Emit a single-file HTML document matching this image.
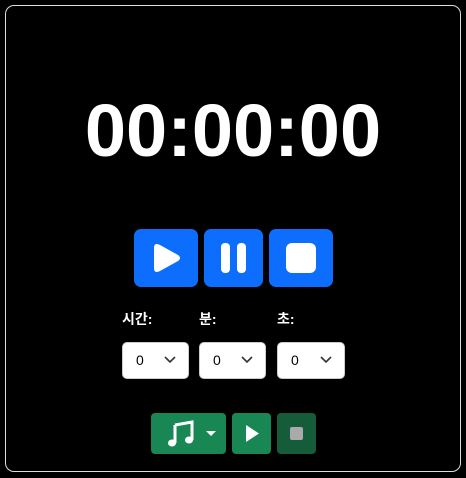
<!DOCTYPE html>
<html><head><meta charset="utf-8"><style>
body{margin:0;background:#000;width:466px;height:478px;position:relative;overflow:hidden;font-family:"Liberation Sans","Noto Sans CJK KR",sans-serif}
.frame{position:absolute;left:5px;top:5px;width:454px;height:465px;border:1px solid #ddd;border-radius:9px}
.time{position:absolute;left:0;width:466px;top:88px;text-align:center;color:#fff;font-weight:bold;font-size:74px;line-height:86px}
.b{position:absolute;background:#0d6efd;border-radius:7px;top:229px;height:58px}
.l{position:absolute;top:309px;color:#fff;font-weight:bold;font-size:14px}
.s{position:absolute;top:342px;height:37px;background:#fff;border-radius:5px;border:1px solid #ccc;box-sizing:border-box}
.s span{position:absolute;left:13px;top:9px;font-size:14px;color:#000}
.s svg{position:absolute;right:12px;top:13px}
.g{position:absolute;top:413px;height:41px;background:#198754;border-radius:4px}
</style></head><body>
<div class="frame"></div>
<div class="time">00:00:00</div>
<div class="b" style="left:134px;width:64px"><svg width="64" height="58"><path d="M20 19 Q20 13 26 16 L44 26 Q48 29 44 32 L26 42 Q20 45 20 39Z" fill="#fff"/></svg></div>
<div class="b" style="left:204px;width:59px"><svg width="59" height="58"><rect x="17" y="14" width="9" height="30" rx="4" fill="#fff"/><rect x="33" y="14" width="9" height="30" rx="4" fill="#fff"/></svg></div>
<div class="b" style="left:269px;width:64px"><svg width="64" height="58"><rect x="17" y="14" width="30" height="30" rx="6" fill="#fff"/></svg></div>
<div class="l" style="left:122px">시간:</div>
<div class="l" style="left:199px">분:</div>
<div class="l" style="left:277px">초:</div>
<div class="s" style="left:122px;width:67px"><span>0</span><svg width="12" height="8"><path d="M1 1L6 6L11 1" stroke="#333" stroke-width="1.6" fill="none"/></svg></div>
<div class="s" style="left:199px;width:67px"><span>0</span><svg width="12" height="8"><path d="M1 1L6 6L11 1" stroke="#333" stroke-width="1.6" fill="none"/></svg></div>
<div class="s" style="left:277px;width:68px"><span>0</span><svg width="12" height="8"><path d="M1 1L6 6L11 1" stroke="#333" stroke-width="1.6" fill="none"/></svg></div>
<div class="g" style="left:151px;width:75px"><svg width="75" height="41"><path d="M24 12 L41 9 V27" stroke="#fff" stroke-width="3" fill="none"/><path d="M24 12 V30" stroke="#fff" stroke-width="3"/><ellipse cx="21" cy="30" rx="4" ry="3.5" fill="#fff"/><ellipse cx="38" cy="27" rx="4" ry="3.5" fill="#fff"/><path d="M55 18 H65 L60 23Z" fill="#fff"/></svg></div>
<div class="g" style="left:232px;width:39px"><svg width="39" height="41"><path d="M14 12 L27 20.5 L14 29Z" fill="#fff"/></svg></div>
<div class="g" style="left:277px;width:39px;background:#145c3a"><svg width="39" height="41"><rect x="13" y="14" width="13" height="13" rx="2" fill="#aaa"/></svg></div>
</body></html>
